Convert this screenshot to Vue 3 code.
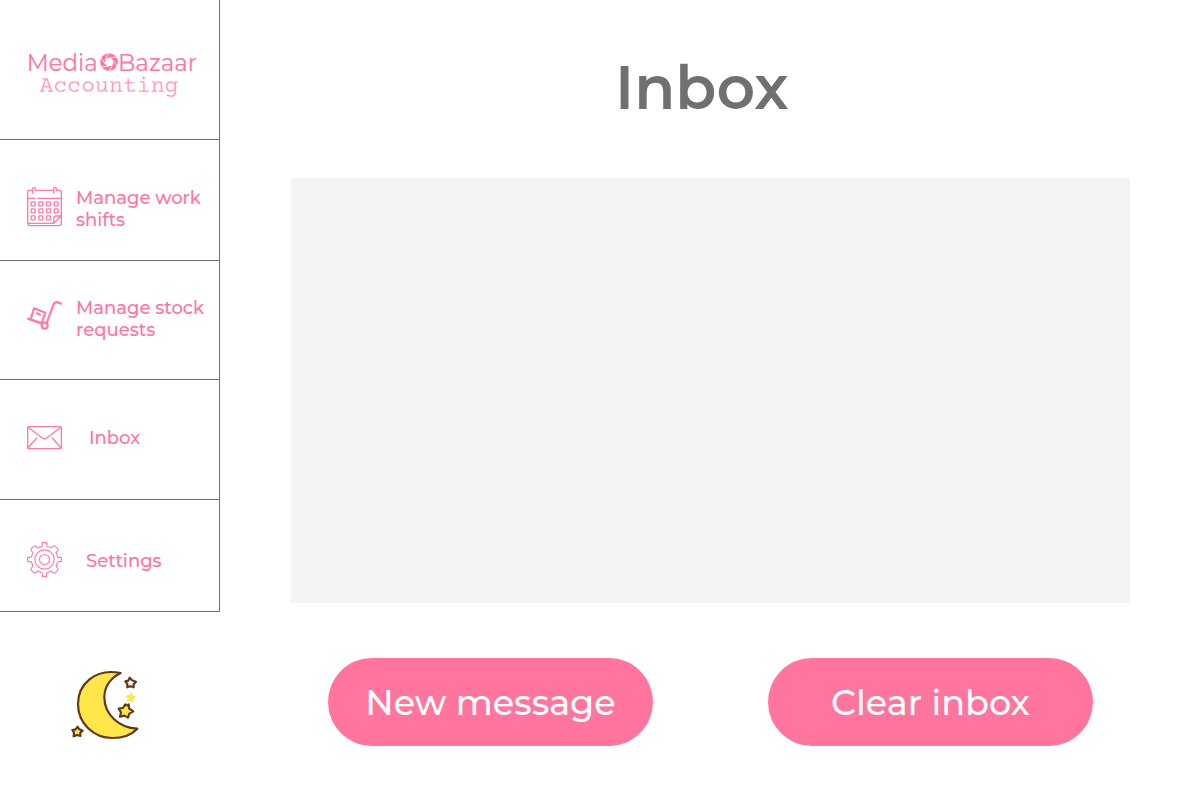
<script setup>
const days = []
for (const y of [86, 107, 128]) {
  for (const x of [54, 77, 100, 123]) {
    if (!(y === 128 && x === 123)) days.push({ x: x - 5.5, y: y - 5.5 })
  }
}
</script>

<template>
  <div class="page">
    <aside class="side">
      <nav class="menu">
        <header class="brand">
          <svg width="180" height="56" viewBox="20 46 180 56">
            <g class="brand-main">
              <text x="26.800" y="71" textLength="71" lengthAdjust="spacingAndGlyphs">Media</text>
              <text x="118" y="71" textLength="79" lengthAdjust="spacingAndGlyphs">Bazaar</text>
            </g>
            <g transform="translate(109 62)">
              <circle r="6.400" fill="none" stroke="#ff759e" stroke-width="4.800" />
              <g stroke="#fff" stroke-width="0.800">
                <path v-for="n in 6" :key="n" d="M-1 -3.900L6.500 -6.500" :transform="`rotate(${n * 60 + 12})`" />
              </g>
            </g>
            <text class="brand-sub" x="39.500" y="91.500" textLength="139" lengthAdjust="spacingAndGlyphs">Accounting</text>
          </svg>
        </header>

        <a class="item shifts">
          <svg width="60" height="60" viewBox="0 0 180 180" class="icon">
            <path d="M51 46H44Q38 46 38 52V144Q38 152 46 152H130Q139 152 139 144V52Q139 46 133 46H125M63 46H114M38 70H60M68 70H139M40 145H116L139 122M116 145V130Q116 123 123 123H138" />
            <path d="M53 55V42Q53 37 57 37T61 42V47M116 55V42Q116 37 120 37T124 42V47" />
            <rect v-for="d in days" :key="`${d.x}-${d.y}`" :x="d.x" :y="d.y" width="12" height="12" rx="2" />
          </svg>
          <span class="label">Manage work<br />shifts</span>
        </a>

        <a class="item stock">
          <svg width="60" height="50" viewBox="0 0 180 150" class="icon bold">
            <path d="M39 86L80 101M57 55L91 68L80 100L47 88ZM66 70L75 74M138 41L130 37Q119 34 115 45L95 99" />
            <circle cx="89" cy="107" r="9" />
          </svg>
          <span class="label">Manage stock<br />requests</span>
        </a>

        <a class="item inbox">
          <svg width="60" height="45" viewBox="0 0 180 135" class="icon">
            <rect x="38" y="35" width="101" height="66" rx="4" />
            <path d="M39 37L82 69Q88 74 95 69L138 37M39 99L65 69M138 99L112 69" />
          </svg>
          <span class="label">Inbox</span>
        </a>

        <a class="item settings">
          <svg width="60" height="60" viewBox="0 0 180 180" class="icon thin">
            <path d="M82 38H95V47Q96 50 101 51T108 53L115 48Q118 46 121 49L128 56Q131 59 128 62L123 68Q127 74 127 79Q128 82 131 82H139V95H131Q128 95 127 99T123 108L128 115Q131 118 128 121L121 128Q118 131 115 128L108 123Q103 127 98 127Q95 128 95 131V139H82V131Q82 128 78 127T69 123L62 128Q59 131 56 128L49 121Q46 118 49 115L54 108Q51 103 50 98Q49 95 46 95H38V82H46Q49 82 50 78T54 69L49 62Q46 59 49 56L56 49Q59 46 62 49L69 54Q74 51 79 50Q82 49 82 46Z" />
            <circle cx="88.500" cy="88.500" r="29" />
            <circle cx="88.500" cy="88.500" r="15" />
          </svg>
          <span class="label">Settings</span>
        </a>
      </nav>

      <svg class="night" width="90" height="90" viewBox="0 0 270 270">
        <g fill="#ffe74a" stroke="#603717" stroke-width="6.500" stroke-linejoin="round">
          <path d="M182 39C103 23 54 75 54 132C54 190 101 234 157 234C190 234 216 223 232 206C178 204 133 164 133 112C133 80 152 53 182 39Z" />
          <path d="M206 133L207 145L220 154L208 161L204 173L193 167L180 170L183 157L176 146L189 144L196 133Q202 139 206 133Z" />
          <path d="M53 200L57 207L68 212L61 218L61 228L51 225L41 229L42 218L37 210L47 208Z" />
          <path fill="#fff" d="M209 53L216 61L228 65L221 73L221 82L211 79L202 82L202 72L196 64L205 62Z" />
        </g>
        <path fill="#ffe74a" stroke="#ffe74a" stroke-width="1.500" stroke-linejoin="round" d="M214 97L217 107L228 110L220 116L221 127L212 122L202 125L204 115L197 108L208 106Z" />
      </svg>
    </aside>

    <main class="content">
      <h1>Inbox</h1>
      <section class="panel"></section>
      <div class="actions">
        <button type="button">New message</button>
        <button type="button">Clear inbox</button>
      </div>
    </main>
  </div>
</template>

<style>
body {
  margin: 0;
  background: #fff;
}
</style>

<style scoped>
.page {
  display: flex;
  width: 1200px;
  height: 800px;
  overflow: hidden;
  font-family: Montserrat, Inter, sans-serif;
}
.side {
  width: 220px;
  flex: none;
}
.menu {
  box-sizing: border-box;
  height: 612px;
  border-right: 1px solid #707070;
}
.brand {
  box-sizing: border-box;
  height: 140px;
  padding: 46px 0 0 20px;
  border-bottom: 1px solid #707070;
}
.brand svg {
  display: block;
}
.brand-main {
  font-size: 23.500px;
  font-weight: 400;
  fill: #ff759e;
  stroke: #ff759e;
  stroke-width: 0.150;
}
.brand-sub {
  font-family: "Courier Prime", "Liberation Mono", monospace;
  font-size: 23.500px;
  fill: #ff88ac;
  stroke: #fff;
  stroke-width: 0.400;
}
.item {
  box-sizing: border-box;
  display: flex;
  align-items: flex-start;
  border-bottom: 1px solid #707070;
  padding-left: 15px;
  color: #ff759e;
  font-size: 18px;
  font-weight: 500;
  line-height: 22px;
}
.shifts { height: 121px; padding-top: 35px; }
.stock { height: 119px; padding-top: 29px; }
.inbox { height: 120px; padding-top: 35px; }
.settings { height: 112px; padding-top: 30px; }
.icon {
  flex: none;
  fill: none;
  stroke: #ff7ba3;
  stroke-width: 4;
  stroke-linejoin: round;
  stroke-linecap: round;
}
.bold { stroke-width: 6.500; }
.thin { stroke-width: 3.400; }
.label { white-space: nowrap; }
.shifts .label { margin: 12px 0 0 1px; }
.stock .label { margin: 7px 0 0 1px; }
.inbox .label { margin: 12px 0 0 14px; }
.settings .label { margin: 20px 0 0 11px; }
.night {
  display: block;
  margin: 48px 0 0 60px;
}
.content {
  width: 839px;
  margin-left: 71px;
}
h1 {
  height: 178px;
  margin: 0;
  padding-left: 324px;
  box-sizing: border-box;
  color: #707070;
  font-size: 60px;
  font-weight: 600;
  line-height: 176px;
}
.panel {
  height: 425px;
  background: #f3f3f3;
}
.actions {
  display: flex;
  gap: 115px;
  padding: 55px 0 0 37px;
}
button {
  width: 325px;
  height: 88px;
  border: 0;
  border-radius: 44px;
  padding: 0;
  background: #ff759e;
  color: #fff;
  font: inherit;
  font-size: 35px;
  font-weight: 500;
}
</style>
